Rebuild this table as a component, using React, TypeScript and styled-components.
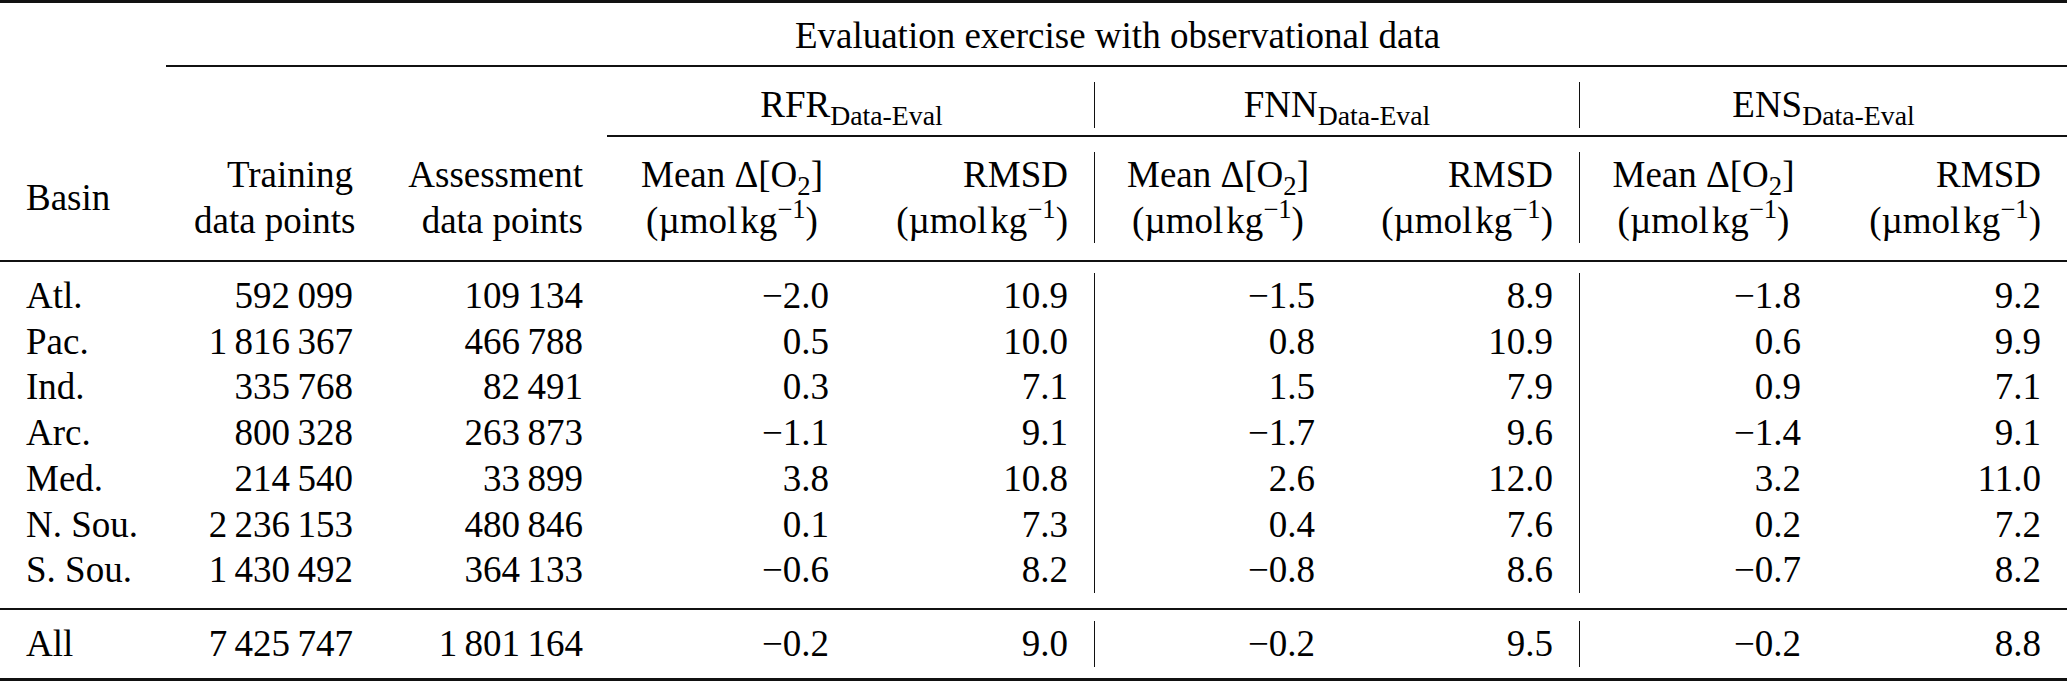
import styled, { createGlobalStyle } from 'styled-components';

const COLS = '168px 211px 230px 246px 239px 247px 238px 248px 240px';
const LINE = 45.7;

const GlobalStyle = createGlobalStyle`
  html, body {
    margin: 0;
    padding: 0;
    background: #ffffff;
  }
  body {
    font-family: "Liberation Serif", "Times New Roman", serif;
    font-size: 37px;
    line-height: ${LINE}px;
    color: #000000;
  }
`;

const Table = styled.div`
  width: 2067px;
`;

const Rule = styled.div<{ $weight: number; $above: number; $below: number; $left?: number }>`
  height: ${(p) => p.$weight}px;
  margin: ${(p) => p.$above}px 0 ${(p) => p.$below}px ${(p) => p.$left ?? 0}px;
  background: #111111;
`;

const Row = styled.div<{ $padBottom?: number }>`
  display: grid;
  grid-template-columns: ${COLS};
  padding-bottom: ${(p) => p.$padBottom ?? 0}px;
`;

const Body = styled.div`
  display: flex;
  flex-direction: column;
`;

const Cell = styled.div<{
  $align?: 'left' | 'right' | 'center';
  $span?: number;
  $rule?: boolean;
  $middle?: boolean;
}>`
  grid-column: span ${(p) => p.$span ?? 1};
  align-self: ${(p) => (p.$middle ? 'center' : 'stretch')};
  padding: 0 26px;
  text-align: ${(p) => p.$align ?? 'right'};
  white-space: nowrap;
  border-left: ${(p) => (p.$rule ? '1.5px solid #111111' : 'none')};
  box-sizing: border-box;
`;

const Sub = styled.span<{ $size?: number }>`
  font-size: ${(p) => p.$size ?? 0.72}em;
  vertical-align: -0.3em;
  line-height: 0;
`;

const Sup = styled.span`
  font-size: 0.72em;
  vertical-align: 0.55em;
  line-height: 0;
`;

const Kg = styled.span`
  margin-left: 3px;
`;

const Unit = () => (
  <>
    (µmol<Kg>kg</Kg>
    <Sup>−1</Sup>)
  </>
);

const MeanHead = () => (
  <>
    Mean Δ[O<Sub $size={0.72}>2</Sub>]
  </>
);

const groups = ['RFR', 'FNN', 'ENS'];

const rows: string[][] = [
  ['Atl.', '592\u2009099', '109\u2009134', '−2.0', '10.9', '−1.5', '8.9', '−1.8', '9.2'],
  ['Pac.', '1\u2009816\u2009367', '466\u2009788', '0.5', '10.0', '0.8', '10.9', '0.6', '9.9'],
  ['Ind.', '335\u2009768', '82\u2009491', '0.3', '7.1', '1.5', '7.9', '0.9', '7.1'],
  ['Arc.', '800\u2009328', '263\u2009873', '−1.1', '9.1', '−1.7', '9.6', '−1.4', '9.1'],
  ['Med.', '214\u2009540', '33\u2009899', '3.8', '10.8', '2.6', '12.0', '3.2', '11.0'],
  ['N. Sou.', '2\u2009236\u2009153', '480\u2009846', '0.1', '7.3', '0.4', '7.6', '0.2', '7.2'],
  ['S. Sou.', '1\u2009430\u2009492', '364\u2009133', '−0.6', '8.2', '−0.8', '8.6', '−0.7', '8.2'],
];

const total = ['All', '7\u2009425\u2009747', '1\u2009801\u2009164', '−0.2', '9.0', '−0.2', '9.5', '−0.2', '8.8'];

// vertical rules sit before the FNN and ENS blocks
const hasRule = (i: number) => i === 5 || i === 7;

const DataRow = ({ values }: { values: string[] }) => (
  <Row>
    {values.map((v, i) => (
      <Cell key={i} $align={i === 0 ? 'left' : 'right'} $rule={hasRule(i)}>
        {v}
      </Cell>
    ))}
  </Row>
);

export default function App() {
  return (
    <Table>
      <GlobalStyle />
      <Rule $weight={3} $above={0} $below={10} />

      <Row>
        <Cell />
        <Cell $span={8} $align="center">
          Evaluation exercise with observational data
        </Cell>
      </Row>

      <Rule $weight={1.5} $above={6.3} $below={15.5} $left={166} />

      <Row>
        <Cell $span={3} />
        {groups.map((g, i) => (
          <Cell key={g} $span={2} $align="center" $rule={i > 0}>
            {g}
            <Sub $size={0.75}>Data-Eval</Sub>
          </Cell>
        ))}
      </Row>

      <Rule $weight={1.5} $above={7.3} $below={15.5} $left={607} />

      <Row $padBottom={2.6}>
        <Cell $align="left" $middle>
          Basin
        </Cell>
        <Cell>
          Training
          <br />
          data points
        </Cell>
        <Cell>
          Assessment
          <br />
          data points
        </Cell>
        {groups.map((g, i) => [
          <Cell key={g + 'm'} $align="center" $rule={i > 0}>
            <MeanHead />
            <br />
            <Unit />
          </Cell>,
          <Cell key={g + 'r'}>
            RMSD
            <br />
            <Unit />
          </Cell>,
        ])}
      </Row>

      <Rule $weight={2} $above={14} $below={11} />

      <Body>
        {rows.map((r) => (
          <DataRow key={r[0]} values={r} />
        ))}
        <Row $padBottom={2}>
          {Array.from({ length: 9 }).map((_, i) => (
            <Cell key={i} $rule={hasRule(i)} />
          ))}
        </Row>
      </Body>

      <Rule $weight={2} $above={13} $below={11} />

      <DataRow values={total} />

      <Rule $weight={3} $above={11.3} $below={0} />
    </Table>
  );
}
